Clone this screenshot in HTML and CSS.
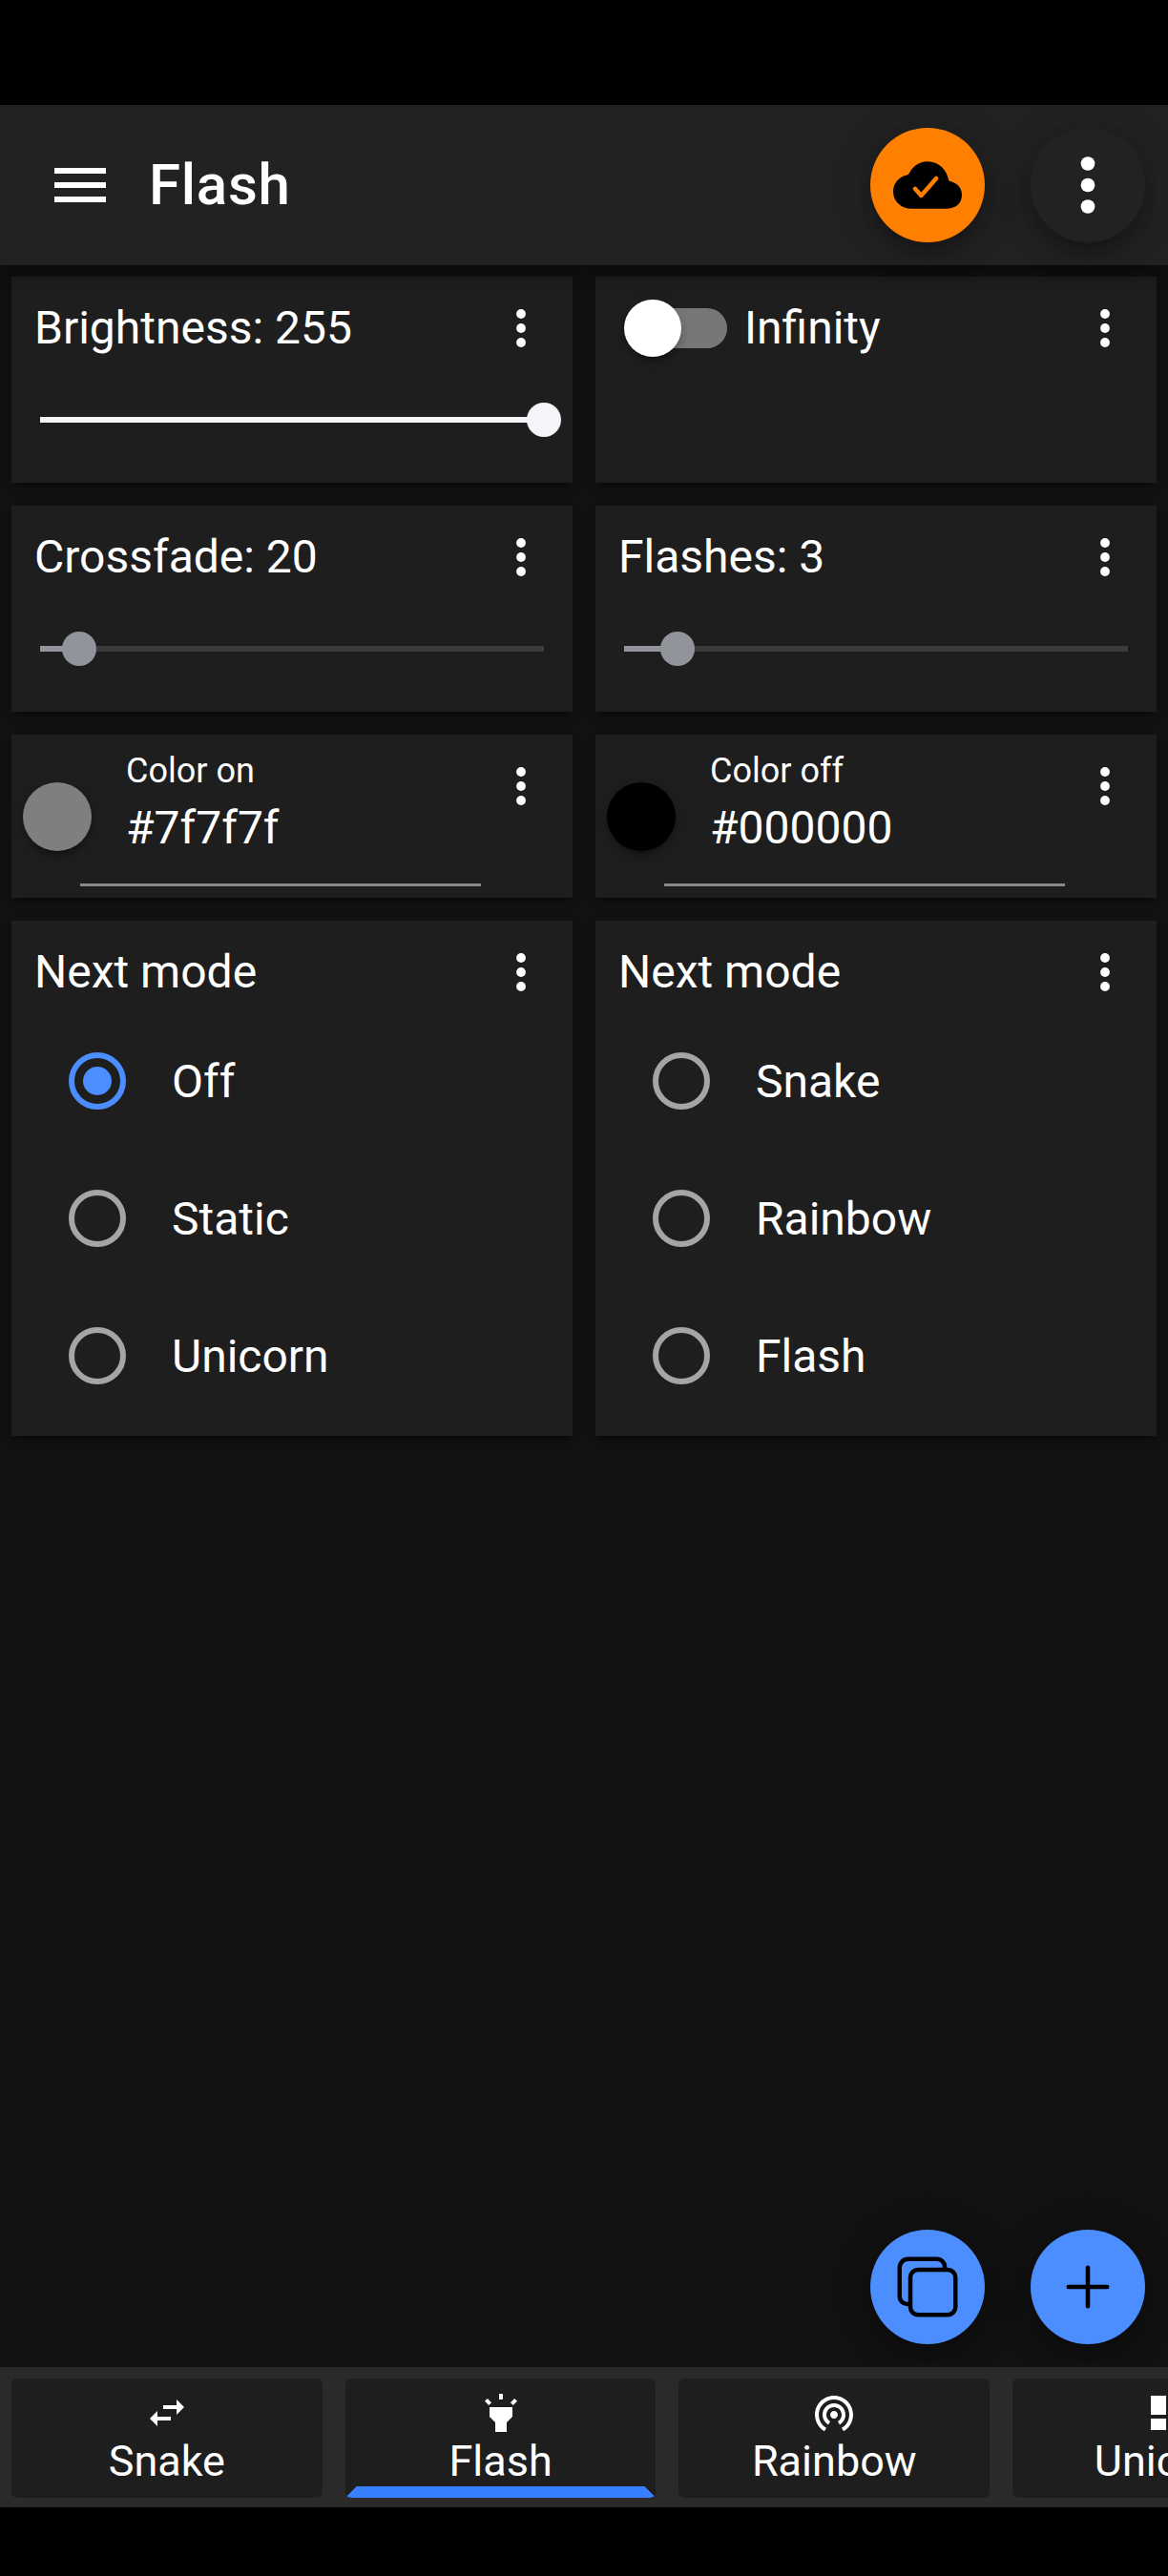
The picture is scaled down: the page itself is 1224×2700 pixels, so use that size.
FILE: index.html
```html
<!DOCTYPE html>
<html lang="en">
<head>
<meta charset="utf-8">
<title>Flash</title>
<link rel="stylesheet" href="styles.css">
</head>
<body>
<svg class="defs" aria-hidden="true">
  <symbol id="dots" viewBox="0 0 48 48"><circle cx="24" cy="9" r="4.9"/><circle cx="24" cy="24" r="4.9"/><circle cx="24" cy="39" r="4.9"/></symbol>
</svg>
<div class="app">
  <header class="toolbar">
    <svg class="menu-icon" viewBox="0 0 24 24"><path d="M3 18h18v-2H3v2zm0-5h18v-2H3v2zm0-7v2h18V6H3z"/></svg>
    <h1 class="title">Flash</h1>
    <button class="fab fab-cloud">
      <svg class="fab-icon" viewBox="0 0 512 512"><path d="M396 432H136c-36.44 0-70.36-12.57-95.51-35.41C14.38 372.88 0 340 0 304c0-36.58 13.39-68.12 38.72-91.22 18.11-16.53 42.22-28.25 69.18-33.87a16 16 0 0011.37-9.15 156.24 156.24 0 0142.05-56.37C187.76 91.69 220.5 80 256 80a153.57 153.57 0 01107.14 42.9c24.73 23.81 41.5 55.28 49.18 92a16 16 0 0012.12 12.39C470 237.42 512 270.43 512 328c0 33.39-12.24 60.78-35.41 79.23C456.23 423.43 428.37 432 396 432z"/><path class="check" d="M163 283l46 51 112-128"/></svg>
    </button>
    <button class="fab fab-plain"><svg class="fab-icon" viewBox="0 0 48 48"><use href="#dots"/></svg></button>
  </header>

  <main class="content">
    <div class="cards">
      <section class="card">
        <div class="card-head"><span class="label">Brightness: 255</span><svg class="dots"><use href="#dots"/></svg></div>
        <div class="slider light"><div class="track"><div class="fill" style="width:100%"></div></div></div>
      </section>
      <section class="card">
        <div class="card-head"><span class="toggle"></span><span class="label">Infinity</span><svg class="dots"><use href="#dots"/></svg></div>
      </section>
      <section class="card">
        <div class="card-head"><span class="label">Crossfade: 20</span><svg class="dots"><use href="#dots"/></svg></div>
        <div class="slider"><div class="track"><div class="fill" style="width:7.8%"></div></div></div>
      </section>
      <section class="card">
        <div class="card-head"><span class="label">Flashes: 3</span><svg class="dots"><use href="#dots"/></svg></div>
        <div class="slider"><div class="track"><div class="fill" style="width:10.6%"></div></div></div>
      </section>
      <section class="card card-color">
        <span class="swatch" style="background:#7f7f7f"></span>
        <div class="field"><span class="field-label">Color on</span><span class="field-value">#7f7f7f</span></div>
        <svg class="dots"><use href="#dots"/></svg>
      </section>
      <section class="card card-color">
        <span class="swatch" style="background:#000000"></span>
        <div class="field"><span class="field-label">Color off</span><span class="field-value">#000000</span></div>
        <svg class="dots"><use href="#dots"/></svg>
      </section>
      <section class="card">
        <div class="card-head"><span class="label">Next mode</span><svg class="dots"><use href="#dots"/></svg></div>
        <div class="option"><span class="radio checked"></span>Off</div>
        <div class="option"><span class="radio"></span>Static</div>
        <div class="option"><span class="radio"></span>Unicorn</div>
      </section>
      <section class="card">
        <div class="card-head"><span class="label">Next mode</span><svg class="dots"><use href="#dots"/></svg></div>
        <div class="option"><span class="radio"></span>Snake</div>
        <div class="option"><span class="radio"></span>Rainbow</div>
        <div class="option"><span class="radio"></span>Flash</div>
      </section>
    </div>
    <div class="actions">
      <button class="fab"><svg class="fab-icon outline" viewBox="0 0 512 512"><rect x="128" y="128" width="336" height="336" rx="57" ry="57"/><path d="M383.5 128l.5-24a56.16 56.16 0 00-56-56H112a64.19 64.19 0 00-64 64v216a56.16 56.16 0 0056 56h24"/></svg></button>
      <button class="fab"><svg class="fab-icon outline" viewBox="0 0 512 512"><path d="M256 112v288M400 256H112"/></svg></button>
    </div>
  </main>

  <nav class="tabs">
    <a class="tab"><svg class="tab-icon" viewBox="0 0 24 24"><path d="M6.99 11L3 15l3.99 4v-3H14v-2H6.99v-3zM21 9l-3.99-4v3H10v2h7.01v3L21 9z"/></svg><span>Snake</span></a>
    <a class="tab active"><svg class="tab-icon" viewBox="0 0 24 24"><path d="M6 14l3 3v5h6v-5l3-3V9H6v5zm5-12h2v3h-2V2zM3.5 5.88l1.41-1.41 2.12 2.12L5.62 8 3.5 5.88zm13.46.71l2.12-2.12 1.41 1.41L18.38 8l-1.42-1.41z"/></svg><span>Flash</span></a>
    <a class="tab"><svg class="tab-icon" viewBox="0 0 24 24"><path d="M12 11c-1.1 0-2 .9-2 2s.9 2 2 2 2-.9 2-2-.9-2-2-2zm6 2c0-3.31-2.69-6-6-6s-6 2.69-6 6c0 2.22 1.21 4.15 3 5.19l1-1.74c-1.19-.7-2-1.97-2-3.45 0-2.21 1.79-4 4-4s4 1.79 4 4c0 1.48-.81 2.75-2 3.45l1 1.74c1.79-1.04 3-2.97 3-5.19zM12 3C6.48 3 2 7.48 2 13c0 3.7 2.01 6.92 4.99 8.65l1-1.73C5.61 18.53 4 15.96 4 13c0-4.42 3.58-8 8-8s8 3.58 8 8c0 2.96-1.61 5.53-4 6.92l1 1.73c2.99-1.73 5-4.95 5-8.65 0-5.52-4.48-10-10-10z"/></svg><span>Rainbow</span></a>
    <a class="tab"><svg class="tab-icon" viewBox="0 0 24 24"><path d="M3 13h8V3H3v10zm0 8h8v-6H3v6zm10 0h8V11h-8v10zm0-18v6h8V3h-8z"/></svg><span>Unicorn</span></a>
  </nav>
</div>
</body>
</html>
```
FILE: styles.css
```css
* { box-sizing: border-box; }

body {
  margin: 0;
  background: #000;
  color: #fff;
  font-family: Roboto, "Liberation Sans", sans-serif;
  font-size: 48px;
}

svg { display: block; flex: none; fill: currentColor; }
.defs { position: absolute; width: 0; height: 0; }

.app {
  display: flex;
  flex-direction: column;
  width: 1224px;
  height: 2700px;
  padding: 110px 0 72px;
  overflow: hidden;
}

/* Toolbar */
.toolbar {
  position: relative;
  z-index: 1;
  display: flex;
  align-items: center;
  height: 168px;
  padding: 0 24px 0 48px;
  background: #222;
  box-shadow: 0 6px 12px -3px rgba(0, 0, 0, .2), 0 12px 15px rgba(0, 0, 0, .14), 0 3px 30px rgba(0, 0, 0, .12);
}
.menu-icon { width: 72px; height: 72px; }
.title {
  flex: 1;
  margin: 0 0 0 36px;
  font-size: 60px;
  font-weight: 500;
  letter-spacing: .0125em;
  line-height: 72px;
}

/* Round buttons */
.fab {
  display: grid;
  place-items: center;
  width: 120px;
  height: 120px;
  padding: 0;
  border: 0;
  border-radius: 50%;
  background: #4c8dff;
  color: #000;
  box-shadow: 0 9px 15px -3px rgba(0, 0, 0, .2), 0 18px 30px rgba(0, 0, 0, .14), 0 3px 54px rgba(0, 0, 0, .12);
}
.fab + .fab { margin-left: 48px; }
.fab-icon { width: 72px; height: 72px; }
.fab-cloud { background: #ff8000; }
.fab-plain { background: #222; color: #fff; }
.check { fill: none; stroke: #ff8000; stroke-width: 32; stroke-linecap: round; stroke-linejoin: round; }
.outline { fill: none; stroke: #000; stroke-width: 32; stroke-linecap: round; stroke-linejoin: round; }

/* Cards */
.content {
  display: flex;
  flex: 1;
  flex-direction: column;
  justify-content: space-between;
  background: #121212;
}
.cards {
  display: grid;
  grid-template-columns: 1fr 1fr;
  grid-template-rows: 216px 216px 171px 540px;
  gap: 24px;
  padding: 12px;
}
.card {
  padding: 12px 30px 12px 24px;
  background: #1e1e1e;
  box-shadow: 0 9px 3px -6px rgba(0, 0, 0, .2), 0 6px 6px rgba(0, 0, 0, .14), 0 3px 15px rgba(0, 0, 0, .12);
}
.card-head { display: flex; align-items: center; height: 84px; }
.label { flex: 1; line-height: 60px; }
.dots { width: 48px; height: 48px; }

.slider {
  display: flex;
  align-items: center;
  height: 108px;
  padding-left: 6px;
  color: #92949c;
}
.track { width: 528px; height: 6px; flex: none; background: #3b3b3b; }
.fill { display: flex; align-items: center; justify-content: flex-end; height: 6px; background: currentColor; }
.fill::after {
  content: "";
  flex: none;
  width: 36px;
  height: 36px;
  margin-right: -18px;
  border-radius: 50%;
  background: currentColor;
}
.slider.light { color: #f4f5f8; }

.toggle {
  display: flex;
  align-items: center;
  width: 102px;
  height: 42px;
  margin: 0 18px 0 12px;
  border-radius: 21px;
  background: #777;
}
.toggle::before {
  content: "";
  width: 60px;
  height: 60px;
  flex: none;
  margin-left: -6px;
  border-radius: 50%;
  background: #fff;
  box-shadow: 0 9px 3px -6px rgba(0, 0, 0, .2), 0 6px 6px rgba(0, 0, 0, .14), 0 3px 15px rgba(0, 0, 0, .12);
}

.card-color {
  display: flex;
  align-items: flex-start;
  justify-content: space-between;
  padding-left: 12px;
}
.swatch {
  flex: none;
  width: 72px;
  height: 72px;
  margin: 38px -12px 0 0;
  border-radius: 50%;
  box-shadow: 0 9px 3px -6px rgba(0, 0, 0, .2), 0 6px 6px rgba(0, 0, 0, .14), 0 3px 15px rgba(0, 0, 0, .12);
}
.field {
  display: flex;
  flex-direction: column;
  width: 420px;
  height: 147px;
  margin-right: auto;
  padding: 5px 0 0 48px;
  border-bottom: 3px solid #8a8a8a;
}
.field-label { font-size: 36px; line-height: 42px; }
.field-value { margin-top: 9px; line-height: 60px; }
.card-color .dots { margin-top: 18px; }

.option { display: flex; align-items: center; gap: 48px; height: 144px; padding-left: 36px; }
.radio {
  display: grid;
  place-items: center;
  width: 60px;
  height: 60px;
  border: 6px solid #a5a5a5;
  border-radius: 50%;
}
.radio.checked { border-color: #4c8dff; }
.radio.checked::before { content: ""; width: 30px; height: 30px; border-radius: 50%; background: #4c8dff; }

.actions { display: flex; justify-content: flex-end; padding: 0 24px 24px; }

/* Bottom tabs */
.tabs {
  display: flex;
  position: relative;
  gap: 24px;
  height: 147px;
  padding: 12px 12px 10px;
  overflow: hidden;
  background: #2a2a2a;
}
.tab {
  display: flex;
  flex: none;
  flex-direction: column;
  align-items: center;
  width: 325.71px;
  padding-top: 12px;
  border-radius: 6px;
  background: #1e1e1e;
  overflow: hidden;
  font-size: 45px;
  line-height: 53px;
}
.tab-icon { width: 48px; height: 48px; }
.tab.active::after {
  content: "";
  flex: none;
  width: 100%;
  height: 12px;
  background: #3880ff;
  clip-path: polygon(12px 0, calc(100% - 12px) 0, 100% 100%, 0 100%);
}
```
